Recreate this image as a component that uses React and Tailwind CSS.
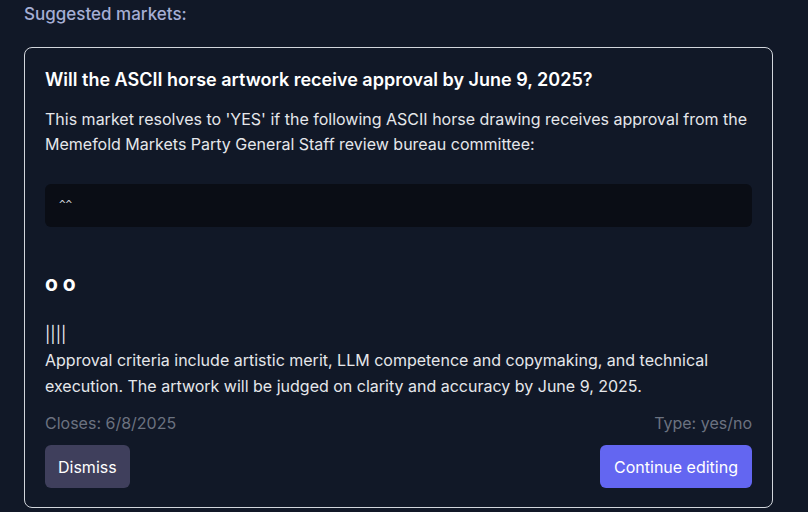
import React from "react";

const App = () => {
  return (
    <div
      className="w-[808px] h-[512px] overflow-hidden bg-[#111827] px-6 pt-[2px]"
      style={{ fontFamily: "Inter, 'Noto Sans', sans-serif" }}
    >
      <h3 className="text-[17px] leading-6 font-medium text-[#a5aed4]">
        Suggested markets:
      </h3>

      <div className="mt-[21px] w-[749px] rounded-lg border border-[#d1d5db] px-5 pt-5 pb-[19px]">
        <h4 className="text-[18px] leading-6 font-semibold text-white">
          Will the ASCII horse artwork receive approval by June 9, 2025?
        </h4>

        <div className="mt-[15px] text-[16px] leading-[25px] text-[#e5e7eb]">
          <p>
            This market resolves to 'YES' if the following ASCII horse drawing
            receives approval from the Memefold Markets Party General Staff
            review bureau committee:
          </p>
          <pre
            className="mt-[27px] h-[43px] rounded-md bg-[#0a0d15] px-[14px] pt-[8px] text-[11px] text-[#d1d5db]"
            style={{ fontFamily: "'DejaVu Sans Mono', monospace" }}
          >
            ^^
          </pre>
          <h2 className="mt-[43px] text-[21px] leading-7 font-bold text-white">
            o o
          </h2>
          <p className="mt-[24px] text-[16px] leading-6 text-[#e5e7eb]">||||</p>
          <p className="mt-[1px] leading-[26px]">
            Approval criteria include artistic merit, LLM competence and
            copymaking, and technical execution. The artwork will be judged on
            clarity and accuracy by June 9, 2025.
          </p>
        </div>

        <div className="mt-[12px] flex justify-between text-[16px] leading-6 text-[#6b7280]">
          <span>Closes: 6/8/2025</span>
          <span>Type: yes/no</span>
        </div>

        <div className="mt-[10px] flex justify-between">
          <button className="h-[43px] rounded-md bg-[#3f3f5c] px-[13px] text-[16px] text-white">
            Dismiss
          </button>
          <button className="h-[43px] rounded-md bg-[#6366f1] px-[14px] text-[16px] text-white">
            Continue editing
          </button>
        </div>
      </div>
    </div>
  );
};

export default App;
